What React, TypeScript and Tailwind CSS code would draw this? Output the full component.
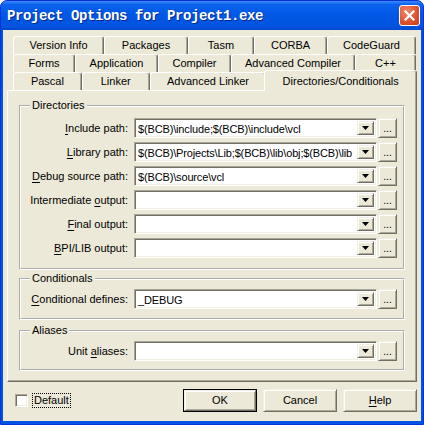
import React from "react";

const raised =
  "border border-t-[#f1efe2] border-l-[#f1efe2] border-r-[#716f64] border-b-[#716f64] shadow-[inset_1px_1px_0_#ffffff,inset_-1px_-1px_0_#aca899] bg-[#ece9d8]";
const sunken =
  "border border-t-[#aca899] border-l-[#aca899] border-r-white border-b-white shadow-[inset_1px_1px_0_#716f64,inset_-1px_-1px_0_#f1efe2] bg-white";

function U({ children }: { children: React.ReactNode }) {
  return <span className="underline underline-offset-[2px] decoration-1">{children}</span>;
}

function Combo({ value }: { value?: string }) {
  return (
    <div className={`${sunken} w-[243px] h-[20px] flex items-stretch p-[2px]`}>
      <div className="flex-1 overflow-hidden whitespace-nowrap pl-[1px] leading-[16px] text-black tracking-[-0.15px]">
        {value}
      </div>
      <div className={`${raised} w-[17px] flex items-center justify-center`}>
        <svg width="7" height="4" viewBox="0 0 7 4">
          <polygon points="0,0 7,0 3.5,4" fill="#000" />
        </svg>
      </div>
    </div>
  );
}

function Row({ label, value }: { label: React.ReactNode; value?: string }) {
  return (
    <div className="flex items-center h-[20px]">
      <div className="w-[108px] text-right whitespace-nowrap pr-[1px]">{label}</div>
      <div className="ml-[5px]">
        <Combo value={value} />
      </div>
      <div className={`${raised} ml-[1px] w-[19px] h-[20px] flex items-end justify-center pb-[3px] leading-[10px] text-[10px]`}>
        ...
      </div>
    </div>
  );
}

function Group({
  title,
  children,
  pt,
  pb,
}: {
  title: string;
  children: React.ReactNode;
  pt: string;
  pb: string;
}) {
  return (
    <fieldset
      className={`mx-[11px] border-2 border-white [border-style:groove] ${pb}`}
    >
      <legend className="ml-[9px] px-[2px] leading-[13px]">{title}</legend>
      <div className={`flex flex-col gap-[4px] ${pt}`}>{children}</div>
    </fieldset>
  );
}

function Tab({ label, w }: { label: string; w: string }) {
  return (
    <div
      className={`${w} h-[18px] flex items-center justify-center border-t border-l border-r border-t-white border-l-white border-r-[#716f64] rounded-t-[3px] shadow-[inset_-1px_0_0_#aca899] whitespace-nowrap`}
    >
      {label}
    </div>
  );
}

export default function App() {
  return (
    <div className="w-[424px] h-[425px] bg-[#0054e3] rounded-t-[7px] flex flex-col overflow-hidden font-['Liberation_Sans',Arial,sans-serif] text-[11px] text-black border border-[#0831d9]">
      {/* Title bar */}
      <div className="h-[29px] flex items-center pl-[6px] pr-[3px] bg-[linear-gradient(#3c8cff_0%,#0b62ec_12%,#0058e6_45%,#0054e0_85%,#0049cf_100%)]">
        <div className="flex-1 text-white font-bold font-['Liberation_Mono',monospace] text-[14px] tracking-[-0.4px] [text-shadow:1px_1px_0_#0a2a8a] pt-[1px]">
          Project Options for Project1.exe
        </div>
        <div className="w-[21px] h-[21px] rounded-[3px] border border-white bg-[radial-gradient(circle_at_35%_30%,#f0876a_0%,#e0542f_55%,#c73a16_100%)] flex items-center justify-center">
          <svg width="11" height="11" viewBox="0 0 11 11">
            <path d="M1.5 1.5 L9.5 9.5 M9.5 1.5 L1.5 9.5" stroke="#fff" strokeWidth="2.2" strokeLinecap="square" />
          </svg>
        </div>
      </div>

      {/* Body */}
      <div className="flex-1 mx-[2px] mb-[3px] bg-[#ece9d8] px-[4px] pt-[6px] flex flex-col">
        {/* Tabs */}
        <div className="ml-[6px] flex flex-col">
          <div className="flex">
            <Tab label="Version Info" w="w-[91px]" />
            <Tab label="Packages" w="w-[84px]" />
            <Tab label="Tasm" w="w-[66px]" />
            <Tab label="CORBA" w="w-[73px]" />
            <Tab label="CodeGuard" w="w-[89px]" />
          </div>
          <div className="flex">
            <Tab label="Forms" w="w-[62px]" />
            <Tab label="Application" w="w-[83px]" />
            <Tab label="Compiler" w="w-[73px]" />
            <Tab label="Advanced Compiler" w="w-[124px]" />
            <Tab label="C++" w="w-[61px]" />
          </div>
          <div className="flex h-[18px] items-end">
            <Tab label="Pascal" w="w-[69px]" />
            <Tab label="Linker" w="w-[68px]" />
            <Tab label="Advanced Linker" w="w-[117px]" />
            <div className="relative z-10 -ml-[2px] -mb-[1px] w-[153px] h-[21px] bg-[#ece9d8] flex justify-center pt-[2px] border-t border-l border-r border-t-white border-l-white border-r-[#716f64] rounded-t-[3px] shadow-[inset_-1px_0_0_#aca899] whitespace-nowrap">
              Directories/Conditionals
            </div>
          </div>
        </div>

        {/* Page */}
        <div className="h-[292px] border border-t-white border-l-white border-r-[#716f64] border-b-[#716f64] shadow-[inset_-1px_-1px_0_#aca899] pt-[8px] flex flex-col">
          <Group title="Directories" pt="pt-[6px]" pb="pb-[10px]">
            <Row
              label={<><U>I</U>nclude path:</>}
              value="$(BCB)\include;$(BCB)\include\vcl"
            />
            <Row
              label={<><U>L</U>ibrary path:</>}
              value="$(BCB)\Projects\Lib;$(BCB)\lib\obj;$(BCB)\lib"
            />
            <Row
              label={<><U>D</U>ebug source path:</>}
              value="$(BCB)\source\vcl"
            />
            <Row label={<>Intermediate <U>o</U>utput:</>} />
            <Row label={<><U>F</U>inal output:</>} />
            <Row label={<><U>B</U>PI/LIB output:</>} />
          </Group>
          <div className="h-[2px]" />
          <Group title="Conditionals" pt="pt-[4px]" pb="pb-[9px]">
            <Row label={<><U>C</U>onditional defines:</>} value="_DEBUG" />
          </Group>
          <div className="h-[4px]" />
          <Group title="Aliases" pt="pt-[4px]" pb="pb-[8px]">
            <Row label={<>Unit <U>a</U>liases:</>} />
          </Group>
        </div>

        {/* Bottom row */}
        <div className="mt-[7px] h-[23px] flex items-center">
          <div className={`${sunken} ml-[8px] w-[13px] h-[13px]`} />
          <div className="ml-[4px] px-[1px] border border-dotted border-black leading-[13px]">
            Default
          </div>
          <div className="ml-auto flex gap-[6px]">
            <div className="w-[74px] h-[23px] border border-black">
              <div className={`${raised} w-full h-full flex items-center justify-center`}>OK</div>
            </div>
            <div className={`${raised} w-[74px] h-[23px] flex items-center justify-center`}>Cancel</div>
            <div className={`${raised} w-[74px] h-[23px] flex items-center justify-center`}>
              <span><U>H</U>elp</span>
            </div>
          </div>
        </div>
      </div>
    </div>
  );
}
